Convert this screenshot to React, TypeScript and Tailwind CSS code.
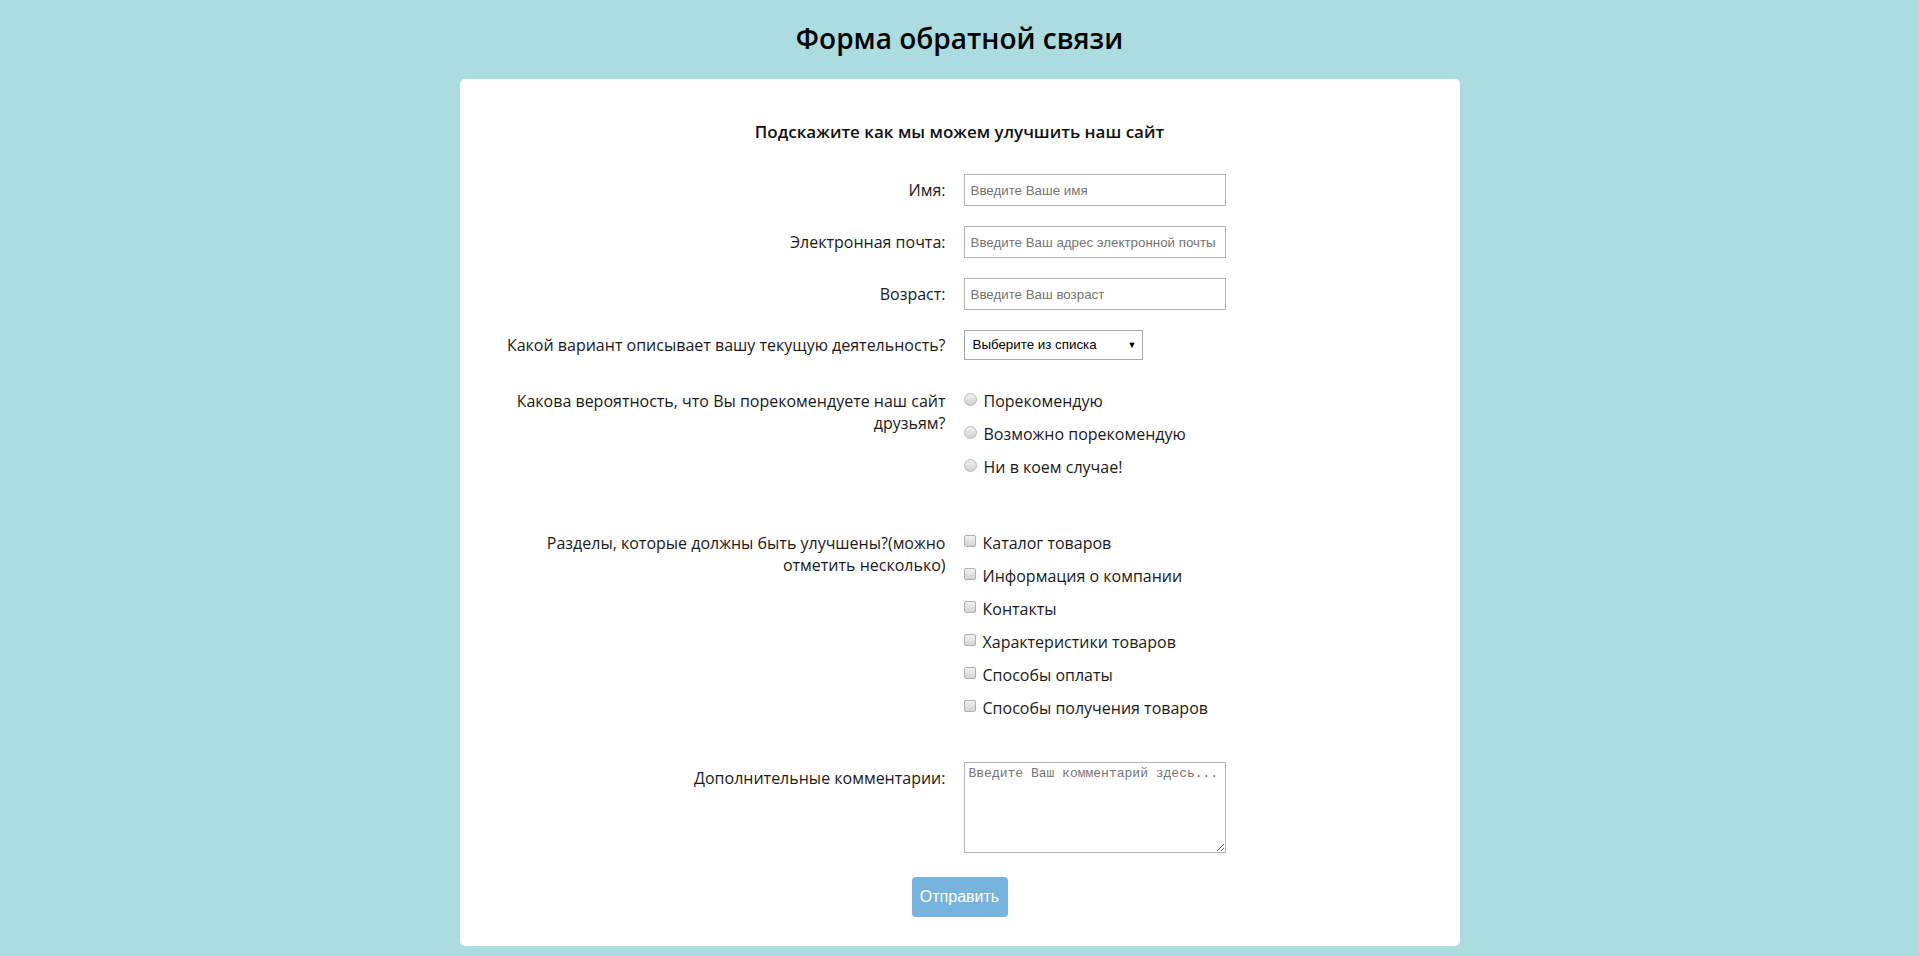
import React from 'react';

const labelCls = "w-[504px] shrink-0 pl-[30px] pr-[18px] text-right text-[16px] leading-[22px] text-[#1a1a1a]";
const inputCls = "w-[262px] h-[32px] border border-[#b3b3b3] bg-white px-[6px] text-[13.33px] text-[#222] outline-none placeholder:text-[#757575] [font-family:Arial,'Liberation_Sans',sans-serif]";

const radios = ["Порекомендую", "Возможно порекомендую", "Ни в коем случае!"];
const sections = [
  "Каталог товаров",
  "Информация о компании",
  "Контакты",
  "Характеристики товаров",
  "Способы оплаты",
  "Способы получения товаров",
];

function TextRow({ label, placeholder, className }: { label: string; placeholder: string; className?: string }) {
  return (
    <div className={`flex items-start ${className ?? ''}`}>
      <label className={`${labelCls} pt-[5px]`}>{label}</label>
      <input type="text" placeholder={placeholder} className={inputCls} />
    </div>
  );
}

export default function App() {
  return (
    <div className="min-h-[956px] bg-[#abdce0] [font-family:'Open_Sans',sans-serif]">
      {/* page title */}
      <h1 className="pt-[19px] pb-[22px] text-center text-[28px] leading-[38px] font-semibold text-black">
        Форма обратной связи
      </h1>

      <form className="mx-auto w-[1000px] rounded-[5px] bg-white pt-[41px] pb-[29px]">
        <h3 className="text-center text-[17px] leading-[24px] font-semibold text-[#111]">
          Подскажите как мы можем улучшить наш сайт
        </h3>

        <TextRow label="Имя:" placeholder="Введите Ваше имя" className="mt-[30px]" />
        <TextRow label="Электронная почта:" placeholder="Введите Ваш адрес электронной почты" className="mt-[20px]" />
        <TextRow label="Возраст:" placeholder="Введите Ваш возраст" className="mt-[20px]" />

        <div className="mt-[20px] flex items-start">
          <label className={`${labelCls} pt-[4px]`}>Какой вариант описывает вашу текущую деятельность?</label>
          <div className="relative">
            <select
              defaultValue=""
              className="h-[30px] w-[179px] appearance-none border border-[#a9a9a9] bg-white pl-[8px] text-[13.33px] text-black outline-none [font-family:Arial,'Liberation_Sans',sans-serif]"
            >
              <option value="">Выберите из списка</option>
              <option>Студент</option>
              <option>Работаю</option>
              <option>Другое</option>
            </select>
            <span className="pointer-events-none absolute right-[6px] top-[8px] text-[9px] leading-[14px] text-black">▼</span>
          </div>
        </div>

        <div className="mt-[30px] flex items-start">
          <label className={labelCls}>Какова вероятность, что Вы порекомендуете наш сайт друзьям?</label>
          <div className="flex flex-col gap-[11px]">
            {radios.map((r) => (
              <label key={r} className="flex h-[22px] items-center text-[16px] leading-[22px] text-[#1a1a1a]">
                <input
                  type="radio"
                  name="recommend"
                  className="m-0 mr-[7px] -mt-[4px] h-[13px] w-[13px] shrink-0 appearance-none rounded-full border border-[#b9b9b9] bg-gradient-to-b from-[#f2f2f2] to-[#cfcfcf]"
                />
                {r}
              </label>
            ))}
          </div>
        </div>

        <div className="mt-[54px] flex items-start">
          <label className={labelCls}>Разделы, которые должны быть улучшены?(можно отметить несколько)</label>
          <div className="flex flex-col gap-[11px]">
            {sections.map((s) => (
              <label key={s} className="flex h-[22px] items-center text-[16px] leading-[22px] text-[#1a1a1a]">
                <input
                  type="checkbox"
                  className="m-0 mr-[7px] -mt-[4px] h-[12px] w-[12px] shrink-0 appearance-none rounded-[2px] border border-[#b0b0b0] bg-gradient-to-b from-[#f2f2f2] to-[#d2d2d2]"
                />
                {s}
              </label>
            ))}
          </div>
        </div>

        <div className="mt-[43px] flex items-start">
          <label className={`${labelCls} pt-[5px]`}>Дополнительные комментарии:</label>
          <textarea
            placeholder="Введите Ваш комментарий здесь..."
            className="h-[91px] w-[262px] border border-[#b3b3b3] bg-white px-[4px] py-[3px] text-[13px] leading-[16px] outline-none placeholder:text-[#757575] [font-family:'Liberation_Mono',monospace]"
          />
        </div>

        <div className="mt-[24px] flex justify-center">
          <button
            type="button"
            className="h-[40px] w-[96px] rounded-[4px] bg-[#76b4df] text-[16px] text-white [font-family:Arial,'Liberation_Sans',sans-serif]"
          >
            Отправить
          </button>
        </div>
      </form>
    </div>
  );
}
